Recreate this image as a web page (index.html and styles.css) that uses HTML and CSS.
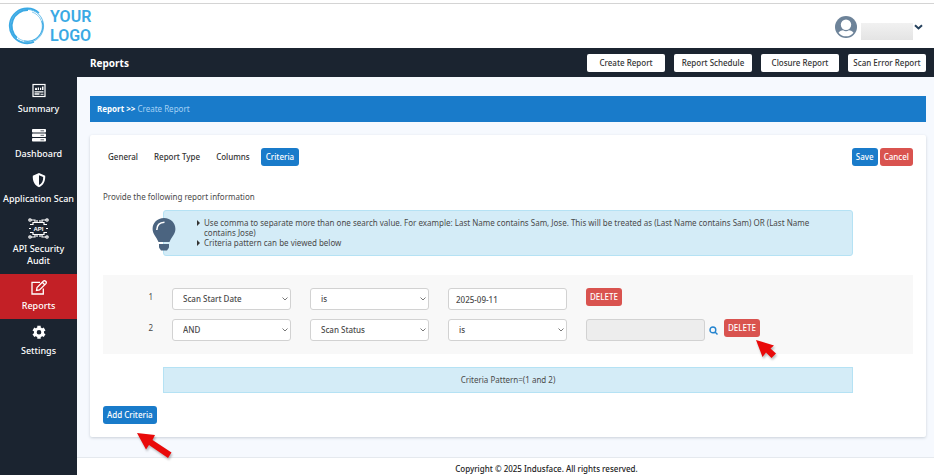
FILE: index.html
```html
<!DOCTYPE html>
<html lang="en">
<head>
<meta charset="utf-8">
<title>Create Report</title>
<link rel="stylesheet" href="styles.css">
</head>
<body>
<div class="page">
  <header class="topbar">
    <a class="logo" href="#">
      <svg class="logo-ring" viewBox="0 0 38 38" fill="none" stroke="#3aa9e4" aria-hidden="true">
        <circle cx="19" cy="19" r="16.6" stroke-width=".8"/>
        <path d="M31 6A17.500 17.500 0 1 0 26 35" stroke-width="1.600"/>
        <path d="M20 3A16 16 0 0 0 9 31" stroke-width="2"/>
        <path d="M24 5A15 15 0 1 1 10 31" stroke-width=".6"/>
        <path d="M34 14A15.500 15.500 0 0 1 16 34" stroke-width="1"/>
      </svg>
      <span class="logo-text">YOUR<br>LOGO</span>
    </a>
    <button class="account" type="button" aria-label="Account menu">
      <svg class="avatar" viewBox="0 0 22 22" aria-hidden="true">
        <circle cx="11" cy="11" r="11" fill="#6d8399"/>
        <circle cx="11" cy="8.800" r="5.200" fill="#fff"/>
        <path d="M3.500 16.800C5 14.800 6.800 14.300 8 14.200C10 15.600 12 15.600 14 14.200C15.200 14.300 17 14.800 18.500 16.800A9.700 9.700 0 0 1 3.500 16.800Z" fill="#fff"/>
      </svg>
      <span class="account-name"></span>
      <svg class="caret" viewBox="0 0 9 6" aria-hidden="true"><path d="M1 1.200L4.500 4.400L8 1.200" fill="none" stroke="#24405c" stroke-width="2"/></svg>
    </button>
  </header>
  <div class="titlebar">
    <h1>Reports</h1>
    <div class="title-actions">
      <button type="button">Create Report</button>
      <button type="button">Report Schedule</button>
      <button type="button">Closure Report</button>
      <button type="button">Scan Error Report</button>
    </div>
  </div>
  <div class="body">
    <nav class="sidebar">
      <a href="#">
        <svg viewBox="0 0 16 16" aria-hidden="true"><rect x="2" y="1.500" width="12" height="12" fill="none" stroke="#fff" stroke-width="1.200"/><path d="M4 7V5.500L5 4.500L6 5.500V7zM6.700 7V4.500H8V7zM9 7V4.800h1.200V7zM11 7V3.500h1.500V7zM3.500 8.200h9v1.200h-9zM3.500 10.200h5v1.600h-5zM9.500 10.800h3v1H9.500z" fill="#fff"/></svg>
        <span>Summary</span>
      </a>
      <a href="#">
        <svg viewBox="0 0 16 16" aria-hidden="true"><g fill="#fff"><rect x="1" y="1" width="14" height="3.600" rx=".8"/><rect x="1" y="5.500" width="14" height="3.600" rx=".8"/><rect x="1" y="10" width="14" height="3.600" rx=".8"/></g><path d="M9.500 2.800h3.500M9.500 7.300h3.500M9.500 11.800h3.500" stroke="#1b2430" stroke-width=".7"/></svg>
        <span>Dashboard</span>
      </a>
      <a href="#">
        <svg viewBox="0 0 16 16" aria-hidden="true"><path fill="#fff" fill-rule="evenodd" d="M8 0L14.200 2.700C14.600 8.500 12 12.500 8 14.200C4 12.500 1.400 8.500 1.800 2.700ZM8 2.200V12C11 10.500 12.300 8 12.200 4Z"/></svg>
        <span>Application Scan</span>
      </a>
      <a class="api" href="#">
        <svg viewBox="0 0 21 21" aria-hidden="true"><g fill="none" stroke="#fff" stroke-width="1.200"><path d="M5 7V4.500H16V7M5 14V16.500H16V14M9 4.500V2M12 4.500V2M9 16.500V19M12 16.500V19M5 6.500H2M16 6.500H19M5 14.500H2M16 14.500H19M1 10.500H3M18 10.500H20M7 4.500V2H3M14 4.500V2H18M7 16.500V19H3M14 16.500V19H18"/><circle cx="2" cy="2" r="1.200"/><circle cx="19" cy="2" r="1.200"/><circle cx="2" cy="19" r="1.200"/><circle cx="19" cy="19" r="1.200"/></g><text x="10.500" y="13" text-anchor="middle" class="api-text">API</text></svg>
        <span>API Security Audit</span>
      </a>
      <a class="active" href="#">
        <svg viewBox="0 0 16 16" fill="none" stroke="#fff" stroke-width="1.300" aria-hidden="true"><path d="M9 2.300H1V14H12.300V8.500"/><path d="M5.500 10.500L6 7.500L12.500 1Q13.500 .3 14.700 1.300Q15.800 2.500 14.900 3.600L8.500 10ZM11.300 2.300L13.700 4.700"/></svg>
        <span>Reports</span>
      </a>
      <a href="#">
        <svg viewBox="0 0 16 16" aria-hidden="true"><g fill="none" stroke="#fff"><circle cx="8" cy="7.300" r="3.700" stroke-width="2.800"/><path d="M8 .8v2.500M8 11.300v2.500M2.400 4L4.500 5.300M11.500 9.300L13.600 10.600M2.400 10.600L4.500 9.300M11.500 5.300L13.600 4" stroke-width="3.400"/></g></svg>
        <span>Settings</span>
      </a>
    </nav>
    <div class="content">
      <main>
        <div class="breadcrumb"><b>Report &gt;&gt;</b> <a href="#">Create Report</a></div>
        <section class="card">
          <div class="toolbar">
            <div class="tabs">
              <button type="button">General</button>
              <button type="button">Report Type</button>
              <button type="button">Columns</button>
              <button class="current" type="button">Criteria</button>
            </div>
            <div class="form-actions">
              <button class="btn primary" type="button">Save</button>
              <button class="btn danger" type="button">Cancel</button>
            </div>
          </div>
          <p class="intro">Provide the following report information</p>
          <div class="hint">
            <svg class="bulb" viewBox="0 0 24 34" aria-hidden="true"><path fill="#4b6480" d="M12 0C5 0 .6 5 .6 11C.6 16 4.500 19 6.500 24H17.500C19.500 19 23.400 16 23.400 11C23.400 5 19 0 12 0Z"/><path d="M4.800 12Q5 4.600 12.500 4.300" fill="none" stroke="#fff" stroke-width="1.600"/><path fill="#4b6480" d="M7 26H17V29Q17 30 16 31L15 32.500H9L8 31Q7 30 7 29Z"/></svg>
            <ul>
              <li>Use comma to separate more than one search value. For example: Last Name contains Sam, Jose. This will be treated as (Last Name contains Sam) OR (Last Name contains Jose)</li>
              <li>Criteria pattern can be viewed below</li>
            </ul>
          </div>
          <div class="criteria">
            <span class="number">1</span>
            <select aria-label="Field 1"><option>Scan Start Date</option></select>
            <select aria-label="Operator 1"><option>is</option></select>
            <input type="text" value="2025-09-11" aria-label="Value 1">
            <div class="row-end"><button class="btn danger" type="button">DELETE</button></div>
            <span class="number line-start">2</span>
            <select aria-label="Joiner 2"><option>AND</option></select>
            <select aria-label="Field 2"><option>Scan Status</option></select>
            <select aria-label="Operator 2"><option>is</option></select>
            <input type="text" disabled aria-label="Value 2">
            <div class="row-end lookup">
              <button class="search" type="button" aria-label="Search"><svg viewBox="0 0 9 9" fill="none" stroke="#2484cf" stroke-width="1.400" aria-hidden="true"><circle cx="3.900" cy="3.900" r="2.900"/><path d="M6 6L8.500 8.500"/></svg></button>
              <button class="btn danger" type="button">DELETE</button>
              <svg class="pointer pointer-delete" viewBox="0 0 24 22" aria-hidden="true"><path fill="#e90a0a" d="M1 1L19 6.500L15.500 9.500L21 14.500L16.500 19L11 13.500L7.500 18Z"/></svg>
            </div>
          </div>
          <div class="pattern">Criteria Pattern=(1 and 2)</div>
          <div class="add">
            <button class="btn primary" type="button">Add Criteria</button>
            <svg class="pointer pointer-add" viewBox="0 0 38 28" aria-hidden="true"><path fill="#e90a0a" d="M1 1L19 3L16.500 8L35.500 20.500L32 26L13 13L10 17.500Z"/></svg>
          </div>
        </section>
      </main>
      <footer>Copyright © 2025 Indusface. All rights reserved.</footer>
    </div>
  </div>
</div>
</body>
</html>
```

FILE: styles.css
```css
* { box-sizing: border-box; }
body {
  margin: 0;
  background: #fff;
  color: #4a4a4a;
  font: 8px/10px "Noto Sans", "Open Sans", sans-serif;
}
button, input, select { font: inherit; color: inherit; }
button { margin: 0; cursor: pointer; }
a { color: inherit; text-decoration: none; }
svg { display: block; }

.page {
  min-height: 100vh;
  margin-right: 2px;
  display: flex;
  flex-direction: column;
}
.topbar {
  height: 45px;
  margin-top: 3px;
  border-top: 1px solid #d4d4d4;
  padding: 0 11px 0 8px;
  display: flex;
  align-items: center;
  justify-content: space-between;
}
.logo { display: flex; align-items: center; gap: 4px; }
.logo-ring { width: 38px; height: 38px; }
.logo-text {
  color: #3aa9e4;
  font: 600 16px/19px Roboto, sans-serif;
}
.account {
  display: flex;
  align-items: center;
  gap: 4px;
  border: 0;
  padding: 2px 0 0;
  background: none;
}
.avatar { width: 22px; height: 22px; }
.account-name {
  width: 52px;
  height: 17px;
  margin-top: 8px;
  background: linear-gradient(#f1f1f1, #e4e4e4);
}
.caret { width: 9px; height: 6px; margin-left: -3px; }

.titlebar {
  height: 29px;
  padding: 0 8px 0 90px;
  background: #1b2430;
  display: flex;
  align-items: center;
  justify-content: space-between;
}
h1 { margin: 0; color: #fff; font-size: 10px; line-height: 14px; }
.title-actions { display: flex; gap: 9px; }
.title-actions button {
  width: 78px;
  height: 18px;
  border: 0;
  border-radius: 2px;
  padding: 0;
  background: #fff;
  color: #333;
  font-weight: 500;
  white-space: nowrap;
}

.body { flex: 1; display: flex; }
.sidebar {
  flex: 0 0 77px;
  background: #1b2430;
  color: #fff;
  font-size: 9px;
  font-weight: 500;
  line-height: 12px;
  text-align: center;
}
.sidebar a {
  display: flex;
  flex-direction: column;
  align-items: center;
  gap: 4px;
  padding: 6px 0 7px;
}
.sidebar svg { width: 16px; height: 16px; }
.sidebar .api svg { width: 21px; height: 21px; }
.sidebar .active { background: #c32026; }
.sidebar span { white-space: nowrap; }
.sidebar .api span { width: 60px; white-space: normal; }
.api-text { fill: #fff; font: 700 6px "Liberation Sans", sans-serif; }

.content { flex: 1; min-width: 0; display: flex; flex-direction: column; }
main {
  flex: 1;
  padding: 19px 8px 20px 13px;
  background: #f6f9fe;
}
.breadcrumb {
  padding: 8px 7px;
  background: #197bca;
  color: #fff;
  margin-bottom: 13px;
}
.breadcrumb a { color: #a5d2f5; }
.card {
  padding: 13px;
  border-radius: 2px;
  background: #fff;
  box-shadow: 0 1px 3px #c9d0d8;
}
.toolbar { display: flex; justify-content: space-between; }
.tabs { display: flex; gap: 6px; }
.tabs button {
  height: 18px;
  padding: 0 5px;
  border: 0;
  border-radius: 2px;
  background: none;
  color: #333;
  font-weight: 500;
}
.tabs .current { background: #197bca; color: #fff; }
.form-actions { display: flex; gap: 2px; }
.btn {
  height: 18px;
  padding: 0 4px;
  border: 0;
  border-radius: 2px;
  color: #fff;
  font-weight: 500;
  white-space: nowrap;
}
.primary { background: #197bca; }
.danger { background: #d9534f; }
.tabs .current, .form-actions .btn, .row-end .btn, .add .btn { border-radius: 3px; }
.intro { margin: 26px 0 8px; }
.hint {
  position: relative;
  margin: 0 60px 19px;
  padding: 7px 30px 7px 40px;
  border: 1px solid #b5e2f4;
  border-radius: 3px;
  background: #d4ecf7;
}
.bulb { position: absolute; left: -12px; top: 7px; width: 24px; height: 34px; }
.hint ul { margin: 0; padding: 0; list-style: none; }
.hint li { position: relative; }
.hint li::before {
  content: "";
  position: absolute;
  left: -7px;
  top: 2px;
  border: 3px solid transparent;
  border-left-color: #333;
  border-right-width: 0;
}
.criteria {
  display: grid;
  grid-template-columns: 50px repeat(5, 1fr);
  gap: 9px 19px;
  padding: 13px 70px 13px 0;
  background: #f8f8f8;
}
.number { padding-top: 4px; text-align: right; }
.line-start { grid-column: 1; }
.criteria select, .criteria input {
  width: 100%;
  height: 22px;
  margin: 0;
  border: 1px solid #d2d2d2;
  border-radius: 3px;
  background-color: #fff;
  padding: 0 7px;
  font-weight: 500;
}
.criteria select {
  appearance: none;
  padding-left: 10px;
  background-image: url("data:image/svg+xml,%3Csvg xmlns='http://www.w3.org/2000/svg' viewBox='0 0 6 4'%3E%3Cpath d='M.5 .5L3 3L5.500 .5' fill='none' stroke='%23555' stroke-width='.8'/%3E%3C/svg%3E");
  background-repeat: no-repeat;
  background-position: right 2px center;
  background-size: 6px 4px;
}
.criteria input:disabled { background: #ededed; }
.row-end { position: relative; }
.lookup { display: flex; gap: 6px; margin-left: -15px; }
.search {
  width: 9px;
  height: 22px;
  padding: 0;
  border: 0;
  background: none;
}
.search svg { width: 9px; height: 9px; }
.pattern {
  margin: 13px 60px;
  padding: 7px;
  border: 1px solid #b5e2f4;
  background: #d4ecf7;
  text-align: center;
}
.add { position: relative; }
.pointer { position: absolute; filter: drop-shadow(1px 2px 1px #0004); }
.pointer-delete { left: 46px; top: 20px; width: 24px; height: 22px; }
.pointer-add { left: 33px; top: 26px; width: 38px; height: 28px; }
footer {
  border-top: 1px solid #e5e9ee;
  padding: 6px 0 1px 82px;
  color: #222;
  font-weight: 500;
  text-align: center;
}
```
